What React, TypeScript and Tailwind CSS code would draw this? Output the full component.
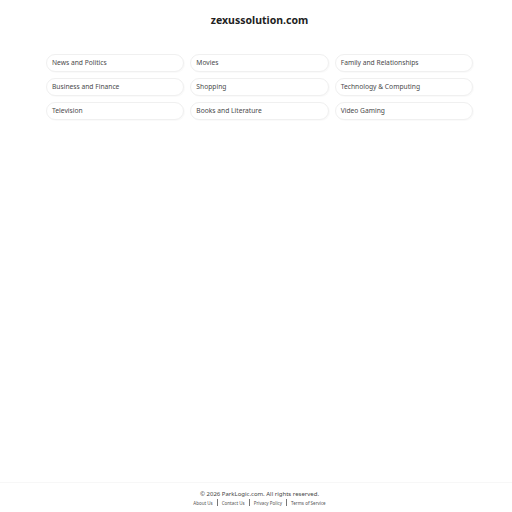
const categories = [
  'News and Politics',
  'Movies',
  'Family and Relationships',
  'Business and Finance',
  'Shopping',
  'Technology & Computing',
  'Television',
  'Books and Literature',
  'Video Gaming',
];

const footerLinks = ['About Us', 'Contact Us', 'Privacy Policy', 'Terms of Service'];

const App = () => {
  return (
    <div
      className="min-h-screen w-full bg-white flex flex-col text-[#333]"
      style={{ fontFamily: '"Noto Sans", "Open Sans", sans-serif' }}
    >
      <div className="flex-1">
        <h1 className="pt-[13px] text-center text-[10.5px] font-bold leading-[14px] text-[#222] pl-[7px]">
          zexussolution.com
        </h1>

        <div className="mt-[27px] ml-[46px] w-[427px] grid grid-cols-3 gap-x-[6px] gap-y-[6px]">
          {categories.map((name) => (
            <div
              key={name}
              className="h-[18px] rounded-[9px] border border-[#f0f0f0] bg-white px-[5px] flex items-center text-[6.7px] text-[#4a4a4a] shadow-[1px_1px_1px_rgba(0,0,0,0.025)]"
            >
              {name}
            </div>
          ))}
        </div>
      </div>

      <footer className="h-[30px] border-t border-[#f7f7f7] flex flex-col items-center pt-[7px] pl-[7px]">
        <div className="text-[6px] leading-[8px] text-[#444]">© 2026 ParkLogic.com. All rights reserved.</div>
        <div className="mt-[1px] flex items-center text-[4.5px] leading-[6px] text-[#555]">
          {footerLinks.map((link, i) => (
            <div key={link} className="flex items-center">
              {i > 0 && <span className="mx-[4px] h-[7px] w-px bg-[#777]" />}
              <span>{link}</span>
            </div>
          ))}
        </div>
      </footer>
    </div>
  );
};

export default App;
